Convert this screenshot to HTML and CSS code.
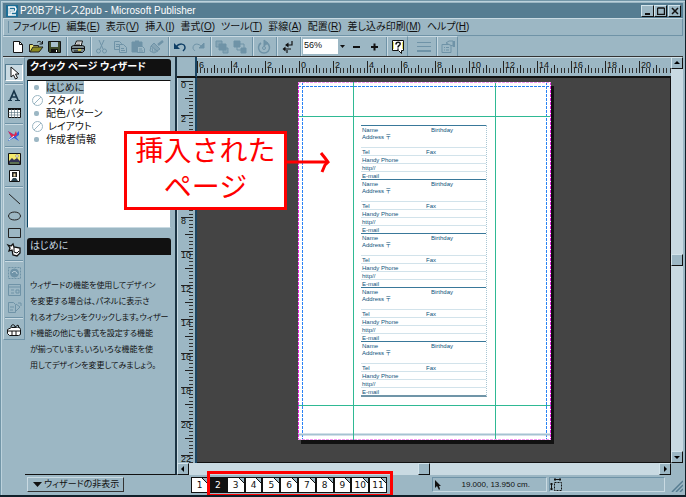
FILE: index.html
```
<!DOCTYPE html>
<html lang="ja">
<head>
  <meta charset="UTF-8" />
  <meta name="viewport" content="width=device-width, initial-scale=1.0"/>
  <title>P20Bアドレス2pub - Microsoft Publisher</title>
  <link rel="stylesheet" href="styles.css">
</head>
<body>
  <div class="window">
    <header class="titlebar">
      <svg class="app-icon" width="12" height="12" viewBox="0 0 12 12"><rect width="12" height="12" fill="#1d6f97"/><path d="M2 2h7l1 2-1 3H5v3M2 10h8M3 2v8M4 5h4" fill="none" stroke="#fff" stroke-width="1.5"/></svg>
      <h1>P20Bアドレス2pub - Microsoft Publisher</h1>
      <button class="win-btn" aria-label="最小化"><svg width="8" height="8"><path d="M1 7h5" stroke="#111" stroke-width="2"/></svg></button>
      <button class="win-btn" aria-label="最大化"><svg width="8" height="8"><path d="M.5 1h7M.5 1v6.5h7V1" fill="none" stroke="#111" stroke-width="1.4"/></svg></button>
      <button class="win-btn close" aria-label="閉じる"><svg width="8" height="8"><path d="M1 1l6 6M7 1L1 7" stroke="#111" stroke-width="1.5"/></svg></button>
    </header>

    <nav class="menubar">
      <button>ファイル(<u>F</u>)</button>
      <button>編集(<u>E</u>)</button>
      <button>表示(<u>V</u>)</button>
      <button>挿入(<u>I</u>)</button>
      <button>書式(<u>O</u>)</button>
      <button>ツール(<u>T</u>)</button>
      <button>罫線(<u>A</u>)</button>
      <button>配置(<u>R</u>)</button>
      <button>差し込み印刷(<u>M</u>)</button>
      <button>ヘルプ(<u>H</u>)</button>
    </nav>

    <div class="toolbar">
      <div class="tools">
        <button aria-label="新規"><svg viewBox="0 0 16 16"><path d="M3.500 2.500h6l3 3v8h-9z" fill="#fff" stroke="#111"/><path d="M9.500 2.500v3h3" fill="none" stroke="#111"/></svg></button>
        <button aria-label="開く"><svg viewBox="0 0 16 16"><path d="M1.500 13V5.500h3l1 1h5v2" fill="#e8e070" stroke="#222"/><path d="M2 13l3-5h10l-4 5z" fill="#8b8a22" stroke="#222"/><path d="M9 3.500c2-2 4-1 5 1M14.500 2v3h-3" fill="none" stroke="#111"/></svg></button>
        <button aria-label="保存"><svg viewBox="0 0 16 16"><path d="M2.500 2.500h12v11h-11l-1-1z" fill="#3e4a2a" stroke="#111"/><path d="M5 3h7v5H5z" fill="#a9c0cc"/><path d="M5 10h7v4H5z" fill="#111"/><path d="M10 11h1v2h-1z" fill="#fff"/></svg></button>
        <span class="sep"></span>
        <button aria-label="印刷"><svg viewBox="0 0 16 16"><path d="M4.500 7l2-5h6l-1.500 5" fill="#fff" stroke="#111"/><path d="M6.500 4h4M6 5.500h4" stroke="#444" stroke-width=".7"/><path d="M1.500 7.500l2-1h9l2 1v4l-2 2h-10l-1-2z" fill="#7b8a90" stroke="#111"/><path d="M2 9.500h12M4 12h7" stroke="#111"/><path d="M8 11h3" stroke="#e5db3c" stroke-width="1.500"/></svg></button>
        <span class="sep"></span>
        <button class="off" aria-label="切り取り"><svg viewBox="0 0 16 16"><path d="M5 1l4 9M10 1L6 10"/><circle cx="4.500" cy="12" r="2"/><circle cx="10.500" cy="12" r="2"/></svg></button>
        <button class="off" aria-label="コピー"><svg viewBox="0 0 16 16"><path d="M2.500 2.500h5l2 2v6h-7zM4 5.500h3M4 7.500h3"/><path d="M7.500 5.500h4l3 3v5h-7z" fill="#9cb7c4"/><path d="M9 9.500h3M9 11.500h4"/></svg></button>
        <button class="off" aria-label="貼り付け"><svg viewBox="0 0 16 16"><path d="M2 3h10v10H2z" fill="#6f93a7"/><path d="M5 2.500h4" stroke-width="2"/><path d="M7.500 7.500h5l2 2v4h-7z" fill="#9cb7c4"/><path d="M9 10h3M9 12h4"/></svg></button>
        <button class="off" aria-label="書式のコピー"><svg viewBox="0 0 16 16"><path d="M15 2l-5 4" stroke-width="2.500"/><path d="M6 4l6 6-3 2-6-5z" fill="#86a5b5"/><path d="M3 7l-1 5 4 2 4-2M4 9l1 4M7 10v3"/></svg></button>
        <span class="sep"></span>
        <button aria-label="元に戻す"><svg viewBox="0 0 16 16"><path d="M4 8c3-4 9-4 9 1 0 1-1 2-2 3" fill="none" stroke="#0f3f66" stroke-width="1.500"/><path d="M2 4v6h6z" fill="#0f3f66"/></svg></button>
        <button class="off" aria-label="やり直し"><svg viewBox="0 0 16 16"><path d="M12 8C9 4 3 4 3 9c0 1 1 2 2 3"/><path d="M14 4v5H9z" fill="#6f93a7"/></svg></button>
        <span class="sep"></span>
        <button class="off" aria-label="前面へ移動"><svg viewBox="0 0 16 16"><path d="M2 2h6v6H2zM9 9h5v5H9z" fill="#86a5b5"/><path d="M5 5h7v6H5z" fill="#6f93a7"/></svg></button>
        <button class="off" aria-label="背面へ移動"><svg viewBox="0 0 16 16"><path d="M5 5h7v6H5z" fill="#9cb7c4"/><path d="M2 2h6v6H2zM9 9h5v5H9z" fill="#6f93a7"/></svg></button>
        <span class="sep"></span>
        <button class="off" aria-label="回転"><svg viewBox="0 0 16 16"><path d="M5 4a5.500 5.500 0 1 0 6 0" stroke-width="1.500"/><path d="M8 1v6l4-3z" fill="#6f93a7"/><circle cx="8" cy="9" r="1.500"/></svg></button>
        <span class="sep"></span>
        <button aria-label="記号の表示"><svg viewBox="0 0 16 16"><path d="M12 2v4H7M4 10h7M7 11v3" fill="none" stroke="#111" stroke-width="1.200"/><path d="M8.500 3.500v5L5 6zM5.500 7.500v5l-3-2.500z" fill="#111"/></svg></button>
        <span class="sep"></span>
        <label class="zoom"><select aria-label="ズーム"><option>56%</option></select><svg viewBox="0 0 9 15"><path d="M2 6h5L4.500 9z" fill="#111"/></svg></label>
        <button aria-label="縮小"><svg viewBox="0 0 16 16"><path d="M5 8h7" stroke="#111" stroke-width="2"/></svg></button>
        <button aria-label="拡大"><svg viewBox="0 0 16 16"><path d="M5 8h7M8.500 4.500v7" stroke="#111" stroke-width="2"/></svg></button>
        <span class="sep"></span>
        <button aria-label="ヘルプ"><svg viewBox="0 0 16 16"><path d="M2.500 1.500h11v10h-2v3l-3-3h-6z" fill="#fff" stroke="#111"/><path d="M6 5.500c0-3 5-3 4 0-.5 1-2 1-2 3M8 9.500v1.200" fill="none" stroke="#111" stroke-width="1.600"/><path d="M3.500 3v7M12.500 3v7" stroke="#ebe46b"/></svg></button>
      </div>
      <div class="tools extra">
        <button class="off" aria-label="線のスタイル"><svg viewBox="0 0 16 16"><path d="M1 3.500h14M1 7.500h14" /><path d="M1 12h14" stroke-width="2"/></svg></button>
        <span class="sep"></span>
        <button class="off" aria-label="プロパティ"><svg viewBox="0 0 16 16"><path d="M2 5.500h9v8H2zM4 8.500h1M6 8.500h3M4 11h1M6 11h3"/><path d="M6 4l3-2h4v5l-3-1-2-1z" fill="#9cb7c4"/><path d="M14 2v6" stroke-width="2"/></svg></button>
      </div>
    </div>

    <main class="workspace">
      <div class="palette">
        <button class="pressed" aria-label="選択"><svg viewBox="0 0 16 16"><path d="M5 2v10l2.500-2 2 4 2-1-2-4H13z" fill="#fff" stroke="#111"/></svg></button>
        <span class="rule"></span>
        <button aria-label="テキスト枠"><svg viewBox="0 0 16 16"><path d="M4 12L8 3l4 9M5 9h6" fill="none" stroke="#173448" stroke-width="1.700"/><path d="M2 12.500h4M9 12.500h5" stroke="#173448"/></svg></button>
        <button aria-label="表"><svg viewBox="0 0 16 16"><path d="M2.500 3.500h12v9h-12z" fill="#fff" stroke="#111"/><path d="M2 4h13" stroke="#111" stroke-width="2"/><path d="M2.500 7.500h12M2.500 10h12M5.500 4v9M8.500 4v9M11.500 4v9" stroke="#536d7b" stroke-width=".6"/></svg></button>
        <span class="rule"></span>
        <button aria-label="ワードアート"><svg viewBox="0 0 16 16"><path d="M2 3l5 3 2 1 4-4v4l-3 2 3 4-5-3-6 3 3-5z" fill="#2f5fe0"/><path d="M2 3l6 4 2-4 1 4-5 3z" fill="#e0264c"/><path d="M3 12l5-4" stroke="#fff"/></svg></button>
        <span class="rule"></span>
        <button aria-label="図"><svg viewBox="0 0 16 16"><path d="M2.500 2.500h12v11h-12z" fill="#f4e96b" stroke="#111"/><path d="M3 10l3-3 2 2 3-2 3 3v3H3z" fill="#335"/><circle cx="11" cy="5" r="1.300" fill="#fff" stroke="#555" stroke-width=".5"/><path d="M4 12h9" stroke="#87b052"/></svg></button>
        <button aria-label="クリップアート"><svg viewBox="0 0 16 16"><path d="M3.500 2.500h10v11h-10z" fill="#fff" stroke="#111"/><path d="M6 4h5v5H6z" fill="#222"/><path d="M7.500 5.500h2v3h-2z" fill="#ead8aa"/><path d="M5 13l2-3h3l2 3z" fill="#29424f"/></svg></button>
        <span class="rule"></span>
        <button aria-label="直線"><svg viewBox="0 0 16 16"><path d="M3 3l11 10" stroke="#222"/></svg></button>
        <button aria-label="楕円"><svg viewBox="0 0 16 16"><ellipse cx="8.500" cy="8" rx="6" ry="4" fill="none" stroke="#222"/></svg></button>
        <button aria-label="四角形"><svg viewBox="0 0 16 16"><path d="M2.500 3.500h12v9h-12z" fill="none" stroke="#222"/></svg></button>
        <button aria-label="図形"><svg viewBox="0 0 16 16"><path d="M2 3l3 1 2-2 1 3 6 1v5l-3 3-4-1-1-5-3 1 1-3z" fill="#fff" stroke="#111" stroke-width="1.300"/><path d="M8 5v5l3 1 2-2" fill="none" stroke="#111"/></svg></button>
        <span class="rule"></span>
        <button class="off" aria-label="ホットスポット"><svg viewBox="0 0 16 16"><path d="M2.500 2.500h12v11h-12z" stroke-dasharray="2 1"/><circle cx="8.500" cy="8" r="4" fill="#6f93a7"/><path d="M6 8c2-3 5-1 5 1" stroke="#c9dae2"/></svg></button>
        <button class="off" aria-label="フォーム"><svg viewBox="0 0 16 16"><path d="M2.500 2.500h12v11h-12zM2.500 5h12M5 8h3M5 11h3M10 8h3v3h-3z"/></svg></button>
        <button class="off" aria-label="HTMLコード"><svg viewBox="0 0 16 16"><path d="M2.500 3.500h5l2 2v8h-7zM4 8h4M4 11h3M10 5l4 3-4 4M12 4h3v3"/></svg></button>
        <span class="rule"></span>
        <button aria-label="デザイン ギャラリー"><svg viewBox="0 0 16 16"><path d="M1.500 7.500l4-2h8l1 2v5l-2 1h-9l-2-2z" fill="#fff" stroke="#111"/><path d="M5 5c0-3 4-3 4 0M9 5l3-2 1 3" fill="#9cb7c4" stroke="#111"/><path d="M2 9h12M6 9v4M10 9v4" stroke="#111"/></svg></button>
      </div>

      <aside class="wizard">
        <h2>クイック ページ ウィザード</h2>
        <ul class="wizard-list">
          <li class="dot"><span class="selected">はじめに</span></li>
          <li class="ban">スタイル</li>
          <li class="dot">配色パターン</li>
          <li class="ban">レイアウト</li>
          <li class="dot">作成者情報</li>
        </ul>
        <h3>はじめに</h3>
        <p>ウィザードの機能を使用してデザイン<br>を変更する場合は、パネルに表示さ<br>れるオプションをクリックします。ウィザー<br>ド機能の他にも書式を設定する機能<br>が揃っています。いろいろな機能を使<br>用してデザインを変更してみましょう。</p>
      </aside>

      <section class="editor">
        <div class="corner"></div>
        <div class="ruler-h" id="rulerH"></div>
        <div class="ruler-v" id="rulerV"></div>
        <div class="canvas">
          <article class="sheet">
            <svg class="guides" width="253" height="358" fill="none">
              <path d="M0 4.500h253M4.500 0v358M248.500 0v358" stroke="#2a83f5" stroke-dasharray="3 1"/>
              <path d="M0 352.500h253" stroke="#a5c2d1" stroke-width="2"/>
              <path d="M0 34.500h253M0 323.500h253M55.500 0v358M197.500 0v358" stroke="#2fb994"/>
              <path d="M.5 0v358M252.500 0v358" stroke="#e32be0" stroke-dasharray="3 1"/>
              <path d="M0 .5h253M0 357.500h253" stroke="#f19af0" stroke-dasharray="3 1"/>
            </svg>
            <table class="records" id="records"></table>
          </article>
        </div>
        <div class="scroll-v">
          <button aria-label="上へ"><svg viewBox="0 0 8 8"><path d="M1 5h6L4 2z"/></svg></button>
          <span class="track"></span><span class="thumb"></span><span class="track"></span>
          <button aria-label="下へ"><svg viewBox="0 0 8 8"><path d="M1 3h6L4 6z"/></svg></button>
        </div>
        <div class="scroll-h">
          <button aria-label="左へ"><svg viewBox="0 0 8 8"><path d="M5 1v6L2 4z"/></svg></button>
          <span class="track"></span><span class="thumb"></span><span class="track"></span>
          <button aria-label="右へ"><svg viewBox="0 0 8 8"><path d="M3 1v6l3-3z"/></svg></button>
        </div>
      </section>
    </main>

    <footer class="statusbar">
      <div class="hide-cell"><button class="hide-wizard"><svg width="9" height="6"><path d="M0 0h9L4.500 5z" fill="#111"/></svg>ウィザードの非表示</button></div>
      <div class="pages">
        <button>1</button>
        <div class="marked" id="pages"></div>
      </div>
      <div class="status-box position">
        <svg width="8" height="10"><path d="M1 0v8l2-2 2 4 1-1-1-3h2z" fill="#111"/></svg>
        <span>19.000, 13.950 cm.</span>
      </div>
      <div class="status-box size"><svg width="12" height="13" fill="none" stroke="#111"><path d="M4.500 4.500h7v8h-7z" stroke-dasharray="2 1"/><path d="M4 1.500h7M1.500 5v7M5 0v3M10 0v3M0 6h3M0 11h3"/></svg></div>
      <svg class="grip" width="12" height="12"><path d="M1 12L12 1M5 12l7-7M9 12l3-3" stroke="#567d92" stroke-width="1.500"/></svg>
    </footer>

    <div class="callout">挿入された<br>ページ
      <svg width="46" height="22" fill="none" stroke="#f00"><path d="M0 11h44" stroke-width="3"/><path d="M37 2l4 5 3 4-3 3-3 7" stroke-width="3"/></svg>
    </div>
  </div>
  <script src="script.js"></script>
</body>
</html>
```
FILE: styles.css
```
* {
  box-sizing: border-box;
}
body {
  margin: 0;
  font-family: "Liberation Sans", "Noto Sans CJK JP", sans-serif;
  font-feature-settings: "palt";
  font-size: 10px;
  color: #111;
}
h1, h2, h3, p, ul {
  margin: 0;
  padding: 0;
  font-weight: normal;
}
button {
  margin: 0;
  padding: 0;
  border: 0;
  background: none;
  color: inherit;
  font: inherit;
  font-feature-settings: inherit;
  white-space: nowrap;
}
svg {
  display: block;
  flex: none;
}
.window {
  position: relative;
  display: flex;
  flex-direction: column;
  height: 100vh;
  min-height: 497px;
  padding: 3px 2px 1px 3px;
  background: #9cb7c4;
  border-right: 1px solid #10202a;
  border-bottom: 2px solid #10202a;
  box-shadow: inset 1px 1px #7296a8, inset 2px 2px #bcd2dc;
  overflow: hidden;
}

/* title and menus */
.titlebar {
  display: flex;
  align-items: center;
  height: 15px;
  padding: 0 2px 0 3px;
  background: #567d92;
  color: #fff;
}
.titlebar h1 {
  flex: 1;
  margin-left: 2px;
  font-size: 10px;
  line-height: 14px;
}
.win-btn, .scroll-v button, .scroll-h button, .thumb {
  display: flex;
  align-items: center;
  justify-content: center;
  background: #9cb7c4;
  border: 1px solid;
  border-color: #d3e4eb #111 #111 #d3e4eb;
}
.win-btn {
  width: 13px;
  height: 12px;
}
.close {
  margin-left: 1px;
}
.menubar {
  display: flex;
  align-items: center;
  gap: 6px;
  height: 18px;
  padding-left: 9px;
  border: 1px solid;
  border-color: #c9dae2 #6f93a7 #6f93a7 #c9dae2;
  line-height: 16px;
}
.menubar::before {
  content: "";
  width: 2px;
  height: 12px;
  margin: 0 -2px 0 -7px;
  border-right: 1px solid #6f93a7;
}

/* toolbar */
.toolbar {
  display: flex;
  height: 21px;
  border-bottom: 1px solid #333;
}
.tools {
  display: flex;
  align-items: center;
  padding-left: 6px;
  border-right: 1px solid #6f93a7;
  border-top: 1px solid #c9dae2;
}
.extra {
  padding-left: 7px;
}
.tools button {
  width: 18px;
  height: 18px;
  padding: 1px;
}
.tools svg, .palette svg {
  width: 16px;
  height: 16px;
}
.off svg {
  fill: none;
  stroke: #6f93a7;
}
.sep {
  width: 6px;
  height: 19px;
  border-left: 3px solid transparent;
  background: linear-gradient(90deg, #6f93a7 1px, #c9dae2 1px 2px, transparent 2px) no-repeat;
}
.zoom {
  display: flex;
  width: 44px;
  height: 15px;
  background: #fff;
}
.zoom select {
  flex: 1;
  min-width: 0;
  padding: 0 1px 3px;
  border: 0;
  background: none;
  appearance: none;
  font: 9px/12px "Liberation Sans", sans-serif;
  color: #111;
}
.tools .zoom svg {
  width: 9px;
  height: 15px;
  background: #9cb7c4;
}

/* three working columns */
.workspace {
  flex: 1;
  min-height: 0;
  display: grid;
  grid-template-columns: 22px 152px 1fr;
}
.palette {
  display: flex;
  flex-direction: column;
  align-items: center;
  align-self: start;
  padding: 6px 1px 1px 0;
  border: 1px solid;
  border-color: #c9dae2 #6f93a7 #6f93a7 #c9dae2;
}
.palette button {
  width: 18px;
  height: 17px;
  padding: 0 1px;
}
.palette .pressed {
  background: #c9dae2;
  border: 1px solid;
  border-color: #567d92 #fff #fff #567d92;
  padding: 0;
}
.rule {
  width: 18px;
  height: 6px;
  background: linear-gradient(transparent 2px, #6f93a7 2px 3px, #c9dae2 3px 4px, transparent 4px);
}
.wizard {
  display: flex;
  flex-direction: column;
  padding: 2px 4px 0 2px;
  border-right: 2px solid #1b3444;
  border-bottom: 1px solid #111;
}
.wizard h2, .wizard h3 {
  height: 17px;
  padding-left: 3px;
  background: #111;
  color: #fff;
  border-radius: 3px 3px 0 0;
  font-size: 10px;
  line-height: 16px;
}
.wizard h2 {
  font-weight: bold;
}
.wizard h3 {
  margin-top: 10px;
  color: #c9dae2;
}
.wizard-list {
  height: 148px;
  margin-top: 4px;
  padding: 0 0 0 18px;
  background: #fff;
  border: 1px solid;
  border-color: #111 #9cb7c4 #c9dae2 #0a4463;
  list-style: none;
}
.wizard-list li {
  display: flex;
  align-items: center;
  height: 13px;
  line-height: 13px;
}
.wizard-list li::before {
  content: "";
  width: 5px;
  height: 5px;
  margin: 0 7px 0 -12px;
  background: #9cb7c4;
  border-radius: 2px;
}
.wizard-list .ban::before {
  width: 9px;
  height: 9px;
  margin: 0 5px 0 -14px;
  border: 1px solid #9cb7c4;
  border-radius: 50%;
  background: linear-gradient(135deg, #fff 45%, #9cb7c4 45% 55%, #fff 55%);
}
.selected {
  background: #9cb7c4;
}
.wizard p {
  margin-top: 23px;
  padding-left: 3px;
  font-size: 8px;
  line-height: 16px;
  white-space: nowrap;
}

/* rulers, sheet and scroll bars */
.editor {
  display: grid;
  grid-template-columns: 20px 1fr 12px;
  grid-template-rows: 21px 1fr 12px;
  min-width: 0;
  min-height: 0;
}
.corner {
  border-right: 2px solid #1b4664;
  border-bottom: 2px solid #111;
}
.ruler-h {
  display: flex;
  padding: 3px 0 3px;
  border-top: 1px solid #c9dae2;
  border-bottom: 2px solid #111;
  overflow: hidden;
}
.ruler-h span, .ruler-v span {
  flex: none;
  font: 9px/9px "Liberation Sans", sans-serif;
}
.ruler-h span {
  width: 34px;
  padding-left: 2px;
  background:
    linear-gradient(90deg, #222 1px, transparent 1px),
    linear-gradient(90deg, transparent 17px, #222 17px 18px, transparent 18px) 0 100% / 100% 8px no-repeat,
    repeating-linear-gradient(90deg, #333 0 1px, transparent 1px 10%) 0 100% / 100% 5px no-repeat;
}
.ruler-v {
  grid-row: 2;
  grid-column: 1;
  padding: 3px 2px 0 3px;
  border-right: 2px solid #1b4664;
  border-left: 1px solid #c9dae2;
  overflow: hidden;
}
.ruler-v span {
  display: block;
  height: 34px;
  background:
    linear-gradient(#222 1px, transparent 1px),
    linear-gradient(transparent 17px, #222 17px 18px, transparent 18px) 100% 0 / 8px 100% no-repeat,
    repeating-linear-gradient(#333 0 1px, transparent 1px 10%) 100% 0 / 4px 100% no-repeat;
}
.canvas {
  padding: 4px 0 0 101px;
  background: #444;
  border-right: 1px solid #111;
  border-bottom: 1px solid #111;
  overflow: hidden;
}
.sheet {
  position: relative;
  width: 253px;
  height: 358px;
  padding: 43px 64px 0 63px;
  background: #fff;
  box-shadow: 3px 4px #111;
}
.guides {
  position: absolute;
  inset: 0;
}
.records {
  width: 100%;
  table-layout: fixed;
  border-spacing: 0;
  border-bottom: 2px solid #7095a8;
  border-right: 1px dotted #a9c6d4;
  font-size: 6px;
  line-height: 6px;
  color: #0d527a;
}
.records .wide {
  width: 64px;
}
.records .narrow {
  width: 5px;
}
.records td {
  height: 8px;
  padding: 1px 0 0 1px;
  border-bottom: 1px solid #d2e3eb;
  white-space: nowrap;
  vertical-align: top;
}
.records .first td {
  border-top: 1px solid #39789a;
  border-bottom: 0;
}
.records .address td {
  height: 15px;
}
.records .short td {
  height: 7px;
  border-bottom: 0;
}
.scroll-v {
  grid-row: 1 / 3;
  grid-column: 3;
  display: flex;
  flex-direction: column;
}
.scroll-h {
  grid-row: 3;
  grid-column: 1 / 3;
  display: flex;
}
.scroll-v button, .scroll-v .thumb, .scroll-h button, .scroll-h .thumb {
  flex: none;
  width: 12px;
  height: 12px;
}
.scroll-v svg, .scroll-h svg {
  width: 8px;
  height: 8px;
}
.track {
  flex: 1;
  background: #c9dae2;
}

/* bottom row */
.statusbar {
  display: flex;
  align-items: center;
  height: 19px;
}
.hide-cell {
  width: 188px;
  padding-left: 24px;
}
.hide-wizard {
  display: flex;
  align-items: center;
  gap: 2px;
  height: 15px;
  width: 97px;
  padding-left: 5px;
  border: 1px solid;
  border-color: #c9dae2 #333 #333 #c9dae2;
  font-size: 9px;
  line-height: 13px;
}
.pages {
  display: flex;
  width: 241px;
}
.pages button {
  width: 17px;
  height: 16px;
  border: 1px solid #111;
  background: linear-gradient(225deg, #9cb7c4 3px, #111 3px 4px, #fff 4px);
  font-family: "DejaVu Sans", sans-serif;
  font-size: 9px;
  line-height: 14px;
}
.marked {
  position: relative;
  display: flex;
  width: 178px;
  margin-left: 1px;
}
.marked button {
  flex: 1;
}
.marked .current {
  background: #111;
  color: #fff;
}
.marked::after {
  content: "";
  position: absolute;
  inset: -6px -6px -4px -2px;
  border: 3px solid #f00;
}
.status-box {
  display: flex;
  align-items: center;
  height: 15px;
  margin-right: 2px;
  border: 1px solid;
  border-color: #6f93a7 #c9dae2 #c9dae2 #6f93a7;
  font: 8px/13px "Liberation Sans", sans-serif;
}
.position {
  width: 115px;
  justify-content: space-between;
  padding: 0 16px 0 1px;
  white-space: nowrap;
}
.size {
  flex: 1;
}
.grip {
  margin: 3px 0 0 4px;
}

/* note laid over the window */
.callout {
  position: absolute;
  left: 124px;
  top: 131px;
  width: 163px;
  height: 79px;
  border: 3px solid #f00;
  background: #fff;
  color: #f00;
  font-size: 28px;
  line-height: 36px;
  text-align: center;
  font-feature-settings: normal;
}
.callout svg {
  position: absolute;
  left: 100%;
  top: 17px;
}
```
FILE: script.js
```
function addLabels(id, labels) {
  document.getElementById(id).innerHTML = labels.map(n => `<span>${n}</span>`).join('');
}

addLabels('rulerH', [6, 4, 2, 0, 2, 4, 6, 8, 10, 12, 14, 16, 18, 20]);
// the note lies over the marks at 4 and 6
addLabels('rulerV', [0, 2, '', '', 8, 10, 12, 14, 16, 18, 20, 22]);

// five address entries on one sheet
const entry = `
  <tr class="first"><td colspan="2">Name</td><td>Birthday</td></tr>
  <tr class="address"><td colspan="3">Address 〒</td></tr>
  <tr><td>Tel</td><td colspan="2">Fax</td></tr>
  <tr><td colspan="3">Handy Phone</td></tr>
  <tr><td colspan="3">http//</td></tr>
  <tr class="short"><td colspan="3">E-mail</td></tr>`;
document.getElementById('records').innerHTML =
  '<colgroup><col class="wide"><col class="narrow"><col></colgroup>' + entry.repeat(5);

let tabs = '';
for (let page = 2; page <= 11; page++) {
  tabs += `<button${page === 2 ? ' class="current"' : ''}>${page}</button>`;
}
document.getElementById('pages').innerHTML = tabs;
```
